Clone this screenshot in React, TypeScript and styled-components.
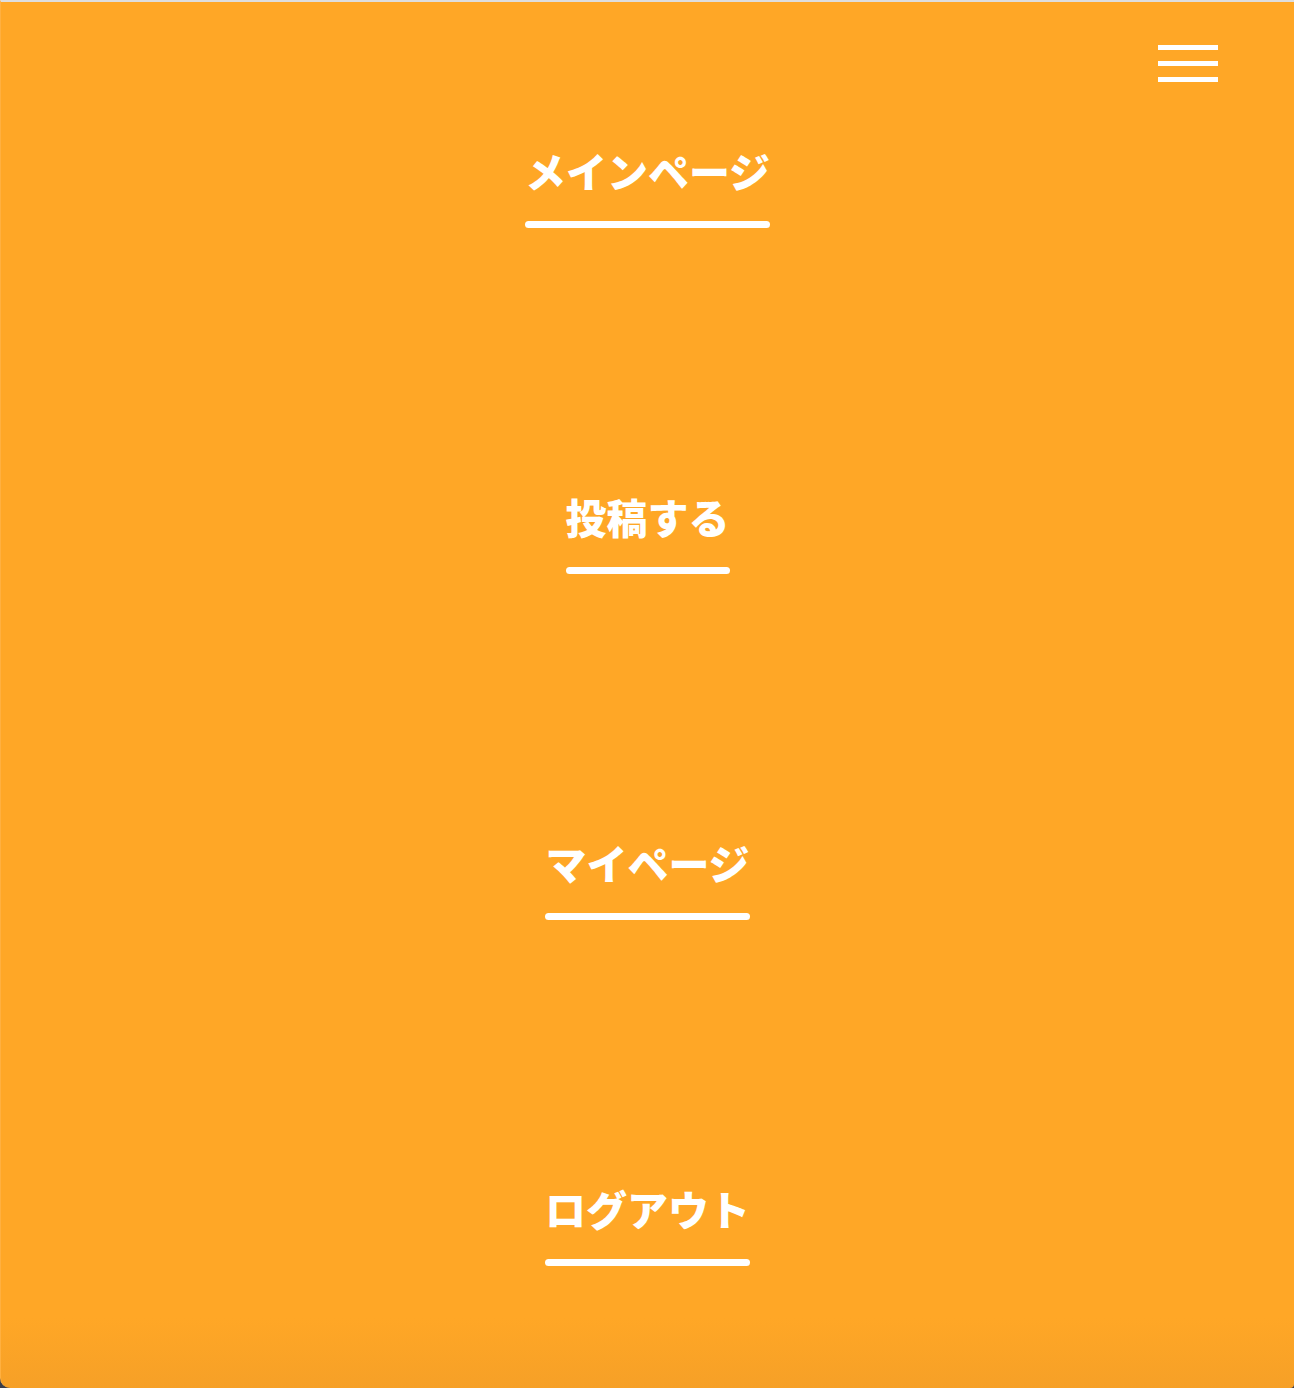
import React from "react";
import styled, { createGlobalStyle } from "styled-components";

const Global = createGlobalStyle`
  html, body {
    margin: 0;
    padding: 0;
    background: #3b3d4a;
  }
  * { box-sizing: border-box; }
`;

const Page = styled.div`
  min-height: 1388px;
  display: flex;
  flex-direction: column;
  background: linear-gradient(
    to bottom,
    #ffa726 0,
    #ffa726 calc(100% - 70px),
    #f6a027 100%
  );
  border-top: 2px solid #dedede;
  border-left: 1px solid #ffb040;
  border-bottom-left-radius: 10px;
  border-bottom-right-radius: 4px;
  font-family: "Noto Sans CJK JP", "Noto Sans", sans-serif;
`;

const Header = styled.header`
  display: flex;
  justify-content: flex-end;
  padding: 43px 76px 0 0;
`;

const MenuButton = styled.button`
  display: flex;
  flex-direction: column;
  gap: 11px;
  width: 60px;
  padding: 0;
  border: none;
  background: transparent;
  cursor: pointer;
`;

const Bar = styled.span`
  display: block;
  width: 60px;
  height: 5px;
  background: #ffffff;
`;

const Nav = styled.nav`
  display: flex;
  flex-direction: column;
  align-items: center;
  gap: 264px;
  margin-top: 64px;
`;

const NavLink = styled.a`
  display: flex;
  flex-direction: column;
  align-items: stretch;
  gap: 26px;
  color: #ffffff;
  font-size: 41px;
  font-weight: 900;
  line-height: 49px;
  text-decoration: none;
  white-space: nowrap;
  cursor: pointer;

  &::after {
    content: "";
    display: block;
    height: 7px;
    border-radius: 4px;
    background: #ffffff;
  }
`;

const items = ["メインページ", "投稿する", "マイページ", "ログアウト"];

export default function App() {
  return (
    <>
      <Global />
      <Page>
        <Header>
          <MenuButton aria-label="menu">
            <Bar />
            <Bar />
            <Bar />
          </MenuButton>
        </Header>
        <Nav>
          {items.map((label) => (
            <NavLink key={label}>{label}</NavLink>
          ))}
        </Nav>
      </Page>
    </>
  );
}
